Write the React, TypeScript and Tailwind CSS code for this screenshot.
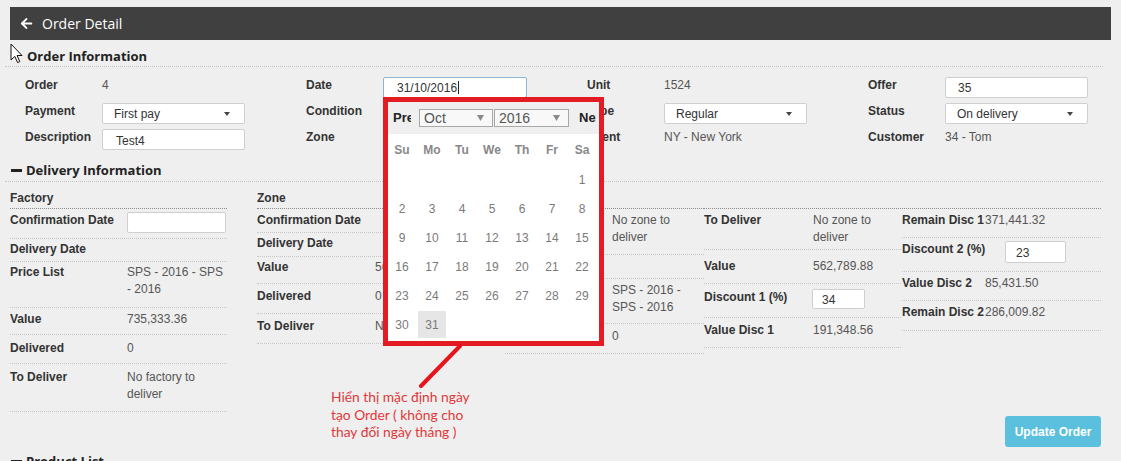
import type { ReactNode } from "react";
import { FaArrowLeft } from "react-icons/fa";

type Row = { label: string; value?: ReactNode; row: string };

const Caret = () => (
  <span className="ml-auto mr-[14px] w-0 h-0 border-l-[3px] border-r-[3px] border-t-[4px] border-l-transparent border-r-transparent border-t-[#444]" />
);

const Select = ({ value }: { value: string }) => (
  <div className="flex items-center w-[143px] h-[21px] pl-[11px] bg-white border border-[#cfcfcf] rounded-[2px] text-[#333]">
    <span>{value}</span>
    <Caret />
  </div>
);

const TextBox = ({ value, className }: { value?: ReactNode; className: string }) => (
  <div className={`flex items-center bg-white border rounded-[2px] text-[#333] ${className}`}>{value}</div>
);

const orderCols: Row[][] = [
  [
    { label: "Order", value: "4", row: "" },
    { label: "Payment", value: <Select value="First pay" />, row: "" },
    { label: "Description", value: <TextBox value="Test4" className="w-[143px] h-[21px] pl-[13px] pt-[2px] border-[#cfcfcf]" />, row: "" },
  ],
  [
    {
      label: "Date",
      value: (
        <TextBox
          value={
            <>
              31/10/2016<span className="ml-[1px] w-px h-[13px] bg-[#222]" />
            </>
          }
          className="w-[144px] h-[21px] pl-[13px] border-[#8fb3d3]"
        />
      ),
      row: "",
    },
    { label: "Condition", value: <Select value="New" />, row: "" },
    { label: "Zone", value: "NY", row: "" },
  ],
  [
    { label: "Unit", value: "1524", row: "" },
    { label: "Type", value: <Select value="Regular" />, row: "" },
    { label: "Client", value: "NY - New York", row: "" },
  ],
  [
    { label: "Offer", value: <TextBox value="35" className="w-[143px] h-[21px] pl-[12px] border-[#cfcfcf]" />, row: "" },
    { label: "Status", value: <Select value="On delivery" />, row: "" },
    { label: "Customer", value: "34 - Tom", row: "" },
  ],
];

const factoryRows: Row[] = [
  { label: "Confirmation Date", value: <TextBox className="w-[99px] h-[21px] border-[#cfcfcf]" />, row: "h-[30px] pt-[3px]" },
  { label: "Delivery Date", row: "h-[23px] pt-[2px]" },
  { label: "Price List", value: "SPS - 2016 - SPS - 2016", row: "h-[46px] pt-[2px]" },
  { label: "Value", value: "735,333.36", row: "h-[27px] pt-[3px]" },
  { label: "Delivered", value: "0", row: "h-[29px] pt-[5px]" },
  { label: "To Deliver", value: "No factory to deliver", row: "h-[48px] pt-[5px]" },
];

const zoneRows: Row[] = [
  { label: "Confirmation Date", row: "h-[24px] pt-[3px]" },
  { label: "Delivery Date", row: "h-[24px] pt-[2px]" },
  { label: "Value", value: "562,789.88", row: "h-[27px] pt-[2px]" },
  { label: "Delivered", value: "0", row: "h-[30px] pt-[4px]" },
  { label: "To Deliver", value: "No zone to deliver", row: "h-[30px] pt-[4px]" },
];

const zone2Rows: Row[] = [
  { label: "To Deliver", value: "No zone to deliver", row: "h-[46px] pt-[3px]" },
  { label: "", row: "h-[24px]" },
  { label: "Price List", value: "SPS - 2016 - SPS - 2016", row: "h-[45px] pt-[3px]" },
  { label: "Delivered", value: "0", row: "h-[30px] pt-[4px]" },
];

const discountRows: Row[] = [
  { label: "To Deliver", value: "No zone to deliver", row: "h-[41px] pt-[3px]" },
  { label: "Value", value: "562,789.88", row: "h-[34px] pt-[8px]" },
  { label: "Discount 1 (%)", value: <TextBox value="34" className="-ml-px w-[53px] h-[20px] pl-[9px] pt-[2px] border-[#cfcfcf]" />, row: "h-[34px] pt-[5px]" },
  { label: "Value Disc 1", value: "191,348.56", row: "h-[30px] pt-[4px]" },
];

const remainRows: Row[] = [
  { label: "Remain Disc 1", value: "371,441.32", row: "h-[29px] pt-[3px]" },
  { label: "Discount 2 (%)", value: <TextBox value="23" className="ml-[20px] w-[61px] h-[22px] pl-[10px] pt-[3px] border-[#cfcfcf]" />, row: "h-[34px] pt-[3px]" },
  { label: "Value Disc 2", value: "85,431.50", row: "h-[29px] pt-[3px]" },
  { label: "Remain Disc 2", value: "286,009.82", row: "h-[30px] pt-[3px]" },
];

const DeliveryColumn = ({ title, rows, className, labelW }: { title: string; rows: Row[]; className: string; labelW: string }) => (
  <div className={`shrink-0 ${className}`}>
    <div className="h-[19px] border-b border-dotted border-[#8a8a8a] font-bold text-[#333] leading-[17px]">{title}</div>
    {rows.map((r, i) => (
      <div key={i} className={`flex items-start border-b border-dotted border-[#c6c6c6] leading-[17px] ${r.row}`}>
        <div className={`${labelW} shrink-0 font-bold text-[#333] whitespace-nowrap`}>{r.label}</div>
        <div className="flex-1 min-w-0 text-[#555]">{r.value}</div>
      </div>
    ))}
  </div>
);

const weeks: (number | null)[][] = [
  [null, null, null, null, null, null, 1],
  [2, 3, 4, 5, 6, 7, 8],
  [9, 10, 11, 12, 13, 14, 15],
  [16, 17, 18, 19, 20, 21, 22],
  [23, 24, 25, 26, 27, 28, 29],
  [30, 31, null, null, null, null, null],
];

const CalSelect = ({ value, className }: { value: string; className: string }) => (
  <div className={`shrink-0 flex items-center h-[18px] pl-[4px] bg-[#f8f8f8] border border-[#a8a8a8] text-[14px] text-[#555] ${className}`}>
    {value}
    <svg className="ml-auto mr-[8px]" width="7" height="6" viewBox="0 0 7 6">
      <path d="M0 0 L7 0 L3.5 6 Z" fill="#8a8a8a" />
    </svg>
  </div>
);

const Calendar = () => (
  <div className="absolute left-[383px] top-[97px] w-[221px] h-[249px] border-[5px] border-[#e31b23] bg-white overflow-hidden">
    <div className="h-[32px] bg-[#efefef] flex items-center pl-[5px]">
      <span className="shrink-0 w-[18px] overflow-hidden whitespace-nowrap font-bold text-[13px] text-[#222]">Prev</span>
      <CalSelect value="Oct" className="ml-[8px] w-[74px]" />
      <CalSelect value="2016" className="ml-[1px] w-[75px]" />
      <span className="shrink-0 ml-[10px] w-[17px] overflow-hidden whitespace-nowrap font-bold text-[13px] text-[#222]">Next</span>
    </div>
    <div className="grid grid-cols-7 w-[210px] -ml-px h-[31px] items-center text-center font-bold text-[#888]">
      {["Su", "Mo", "Tu", "We", "Th", "Fr", "Sa"].map((d) => (
        <span key={d}>{d}</span>
      ))}
    </div>
    {weeks.map((w, i) => (
      <div key={i} className="grid grid-cols-7 w-[210px] -ml-px h-[29px] items-center justify-items-center text-[#7a7a7a]">
        {w.map((d, j) =>
          d === 31 ? (
            <span key={j} className="w-[28px] h-[27px] bg-[#e6e6e6] flex items-center justify-center">
              {d}
            </span>
          ) : (
            <span key={j}>{d ?? ""}</span>
          )
        )}
      </div>
    ))}
  </div>
);

const SectionTitle = ({ children, className }: { children: ReactNode; className: string }) => (
  <div className={`ml-[5px] w-[1098px] flex items-center border-b border-dotted font-['Open_Sans',sans-serif] font-bold text-[13px] leading-[18px] text-[#222] ${className}`}>
    {children}
  </div>
);

const Minus = () => <span className="w-[11px] h-[3px] bg-[#222] mr-[4px]" />;

export default function App() {
  return (
    <div className="relative w-[1121px] h-[461px] overflow-hidden bg-[#efefef] font-['Liberation_Sans',Arial,sans-serif] text-[12px]">
      <div className="pt-[7px] pl-[10px]">
        <div className="w-[1101px] h-[33px] bg-[#404040] flex items-center pl-[10px] gap-[9px] text-white">
          <FaArrowLeft size={13} />
          <span className="font-['Open_Sans',sans-serif] text-[14px]">Order Detail</span>
        </div>
      </div>

      <SectionTitle className="h-[27px] pt-[7px] pl-[22px] items-start border-[#c4c4c4]">Order Information</SectionTitle>

      <div className="flex pl-[25px] pt-[10px]">
        {orderCols.map((col, i) => (
          <div key={i} className="w-[281px] shrink-0 flex flex-col gap-[4px]">
            {col.map((r) => (
              <div key={r.label} className="h-[22px] flex items-start leading-[16px]">
                <div className="w-[77px] shrink-0 font-bold text-[#333]">{r.label}</div>
                <div className="text-[#555]">{r.value}</div>
              </div>
            ))}
          </div>
        ))}
      </div>

      <SectionTitle className="h-[31px] pt-[10px] pl-[6px] items-start border-[#c4c4c4]">
        <span className="flex items-center h-[18px]">
          <Minus />
          Delivery Information
        </span>
      </SectionTitle>

      <div className="flex items-start pl-[10px] pt-[8px]">
        <DeliveryColumn title="Factory" rows={factoryRows} className="w-[217px]" labelW="w-[117px]" />
        <DeliveryColumn title="Zone" rows={zoneRows} className="ml-[30px] w-[240px]" labelW="w-[118px]" />
        <DeliveryColumn title="" rows={zone2Rows} className="ml-[8px] w-[199px]" labelW="w-[107px]" />
        <DeliveryColumn title="" rows={discountRows} className="w-[197px]" labelW="w-[109px]" />
        <DeliveryColumn title="" rows={remainRows} className="ml-[1px] w-[199px]" labelW="w-[83px]" />
      </div>

      <div className="w-[1101px] flex justify-end mt-[4px]">
        <button className="w-[96px] h-[31px] rounded-[3px] bg-[#5bc0de] text-white font-bold">Update Order</button>
      </div>

      <SectionTitle className="h-[31px] pt-[5px] pl-[6px] items-start border-transparent">
        <span className="flex items-center h-[18px]">
          <Minus />
          Product List
        </span>
      </SectionTitle>

      <Calendar />

      <svg className="absolute left-[415px] top-[344px]" width="50" height="46" viewBox="0 0 50 46">
        <line x1="45" y1="2" x2="6" y2="42" stroke="#e8141c" strokeWidth="4" strokeLinecap="round" />
      </svg>

      <div className="absolute left-[331px] top-[388px] font-['Lato',sans-serif] text-[13.8px] leading-[17.5px] text-[#e2383a]">
        Hiển thị mặc định ngày
        <br />
        tạo Order ( không cho
        <br />
        thay đổi ngày tháng )
      </div>

      <svg className="absolute left-[10px] top-[43px]" width="13" height="21" viewBox="0 0 13 21">
        <path d="M1 1 L1 17 L4.8 13.4 L7.6 19.6 L9.8 18.6 L7.1 12.5 L12 12.5 Z" fill="#fff" stroke="#111" strokeWidth="1" strokeLinejoin="round" />
      </svg>
    </div>
  );
}
